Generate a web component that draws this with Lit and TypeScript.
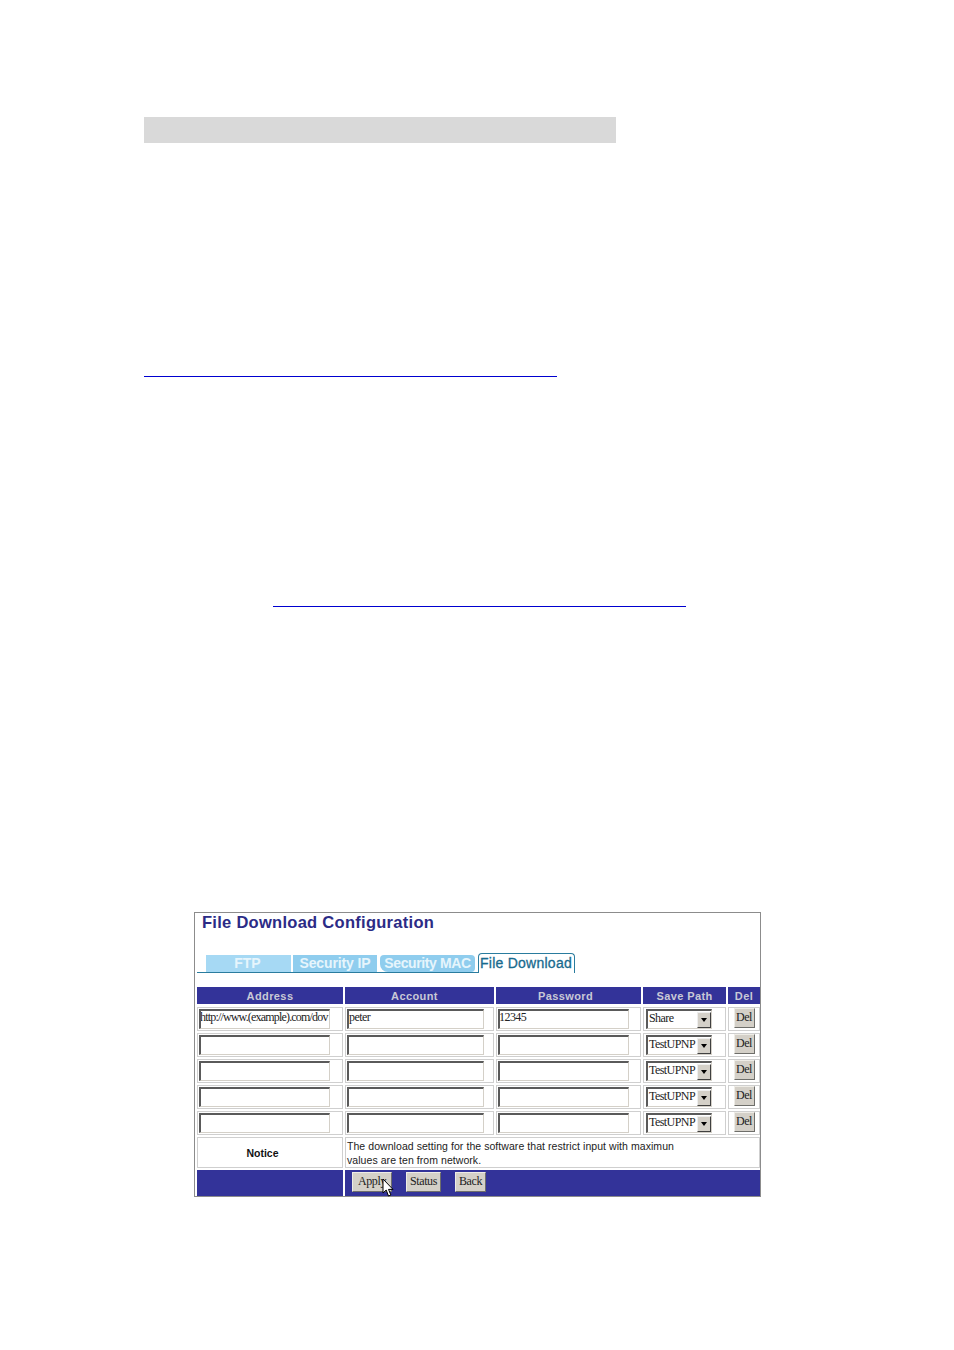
import { LitElement, html, css } from "lit";
import { customElement } from "lit/decorators.js";

const ROWS = [
  { address: "http://www.(example).com/dov", account: "peter", password: "12345", path: "Share" },
  { address: "", account: "", password: "", path: "TestUPNP" },
  { address: "", account: "", password: "", path: "TestUPNP" },
  { address: "", account: "", password: "", path: "TestUPNP" },
  { address: "", account: "", password: "", path: "TestUPNP" },
];

@customElement("app-root")
export class AppRoot extends LitElement {
  static styles = css`
    :host { display: block; width: 954px; height: 1350px; background: #fff; overflow: hidden; font-family: "Liberation Sans", Arial, sans-serif; }
    .page { display: flex; flex-direction: column; align-items: flex-start; padding: 117px 0 0 144px; }
    .shade { width: 472px; height: 26px; background: #d9d9d9; }
    .rule { width: 413px; height: 1px; background: #0000d0; }
    .r1 { margin-top: 233px; }
    .r2 { margin-top: 229px; margin-left: 129px; }
    .panel { position: relative; box-sizing: border-box; width: 567px; height: 285px; margin: 305px 0 0 50px; border: 1px solid #8c8c8c; background: #fff; padding: 0 0 0 2px; }
    h1 { margin: 0; padding: 0 0 0 5px; height: 21px; font-size: 16.5px; line-height: 18px; font-weight: 700; color: #2b2b86; letter-spacing: 0.28px; white-space: nowrap; }
    .tabs { display: flex; align-items: flex-end; height: 39px; width: 378px; position: relative; padding-left: 9px; gap: 2px; }
    .line { position: absolute; left: 0; bottom: 0; width: 281px; height: 1px; background: #2a7c9e; }
    .tab { box-sizing: border-box; height: 17px; margin-bottom: 1px; background: #a6d9f4; color: #e6f5fc; font-weight: 700; font-size: 14px; line-height: 17px; text-align: center; white-space: nowrap; }
    .t1 { width: 85px; padding-right: 2px; }
    .t2 { width: 84px; background: #8fcdee; letter-spacing: -0.12px; }
    .t3 { width: 95px; margin-left: 1px; background: #8fcdee; border-radius: 4px 4px 4px 8px; letter-spacing: -0.38px; }
    .active { box-sizing: border-box; width: 97px; height: 20px; margin: 0 0 0 1px; border: 1px solid #2a7c9e; border-bottom: 0; border-radius: 4px 4px 0 0; background: #fff; color: #186a8e; font-size: 14px; line-height: 18px; font-weight: 400; -webkit-text-stroke: 0.3px #186a8e; letter-spacing: 0.25px; white-space: nowrap; padding-left: 1px; }
    .grid { display: grid; grid-template-columns: 146px 149px 145px 83px 32px; grid-template-rows: 18px repeat(5, 24px) 31px 26px; gap: 2px; margin-top: 14px; }
    .head { height: 17px; background: #333399; color: #c9c9d6; font-size: 11px; font-weight: 700; line-height: 18px; text-align: center; letter-spacing: 0.4px; }
    .h2 { padding-right: 10px; }
    .h3 { padding-right: 6px; }
    .cell { box-sizing: border-box; border: 1px solid #cfcfcf; display: flex; align-items: center; background: #fff; }
    .cell.del { justify-content: center; align-items: flex-start; }
    .input { box-sizing: border-box; height: 20px; margin-left: 1px; border: 1px solid #d4d0c8; border-top: 2px solid #5a5a5a; border-left: 2px solid #5a5a5a; background: #fff; font-family: "Liberation Serif", serif; font-size: 12px; line-height: 13px; color: #222; white-space: nowrap; overflow: hidden; letter-spacing: -0.55px; }
    .w1 { width: 131px; letter-spacing: -0.82px; text-indent: -1px; }
    .w2 { width: 137px; }
    .w3 { width: 131px; margin-left: 1px; text-indent: -1px; }
    .select { box-sizing: border-box; width: 66px; height: 20px; margin-left: 2px; border: 1px solid #d4d0c8; border-top: 2px solid #5a5a5a; border-left: 2px solid #5a5a5a; background: #fff; display: flex; align-items: center; justify-content: space-between; font-family: "Liberation Serif", serif; font-size: 12px; line-height: 14px; color: #222; letter-spacing: -0.55px; padding-left: 1px; }
    .value { padding-bottom: 4px; }
    .arrow { box-sizing: border-box; width: 14px; height: 16px; background: #d4d0c8; border: 1px solid; border-color: #eee #404040 #404040 #eee; display: flex; align-items: center; justify-content: center; }
    .arrow i { width: 0; height: 0; border-left: 3px solid transparent; border-right: 3px solid transparent; border-top: 4px solid #000; }
    .btn { box-sizing: border-box; background: #d4d0c8; border: 1px solid; border-color: #eeece6 #6e6e6a #6e6e6a #eeece6; font-family: "Liberation Serif", serif; font-size: 12px; color: #222; letter-spacing: -0.4px; display: flex; align-items: center; justify-content: center; }
    .b-del { width: 21px; height: 20px; padding-bottom: 2px; }
    .notice-h { font-size: 10.5px; font-weight: 700; color: #111; justify-content: center; padding-right: 15px; }
    .notice { grid-column: 2 / 6; display: block; font-size: 10.5px; line-height: 14px; color: #222; padding: 1px 0 0 1px; white-space: pre; letter-spacing: 0.06px; }
    .bar { background: #333399; }
    .actions { grid-column: 2 / 6; display: flex; align-items: flex-start; padding: 2px 0 0 7px; gap: 14px; }
    .actions .btn { height: 20px; padding-bottom: 2px; }
    .a1 { width: 40px; }
    .a2 { width: 35px; }
    .a3 { width: 31px; }
    .cursor { position: absolute; left: 187px; top: 265px; }
  `;

  render() {
    return html`<div class="page">
      <div class="shade"></div>
      <div class="rule r1"></div>
      <div class="rule r2"></div>
      <section class="panel">
        <h1>File Download Configuration</h1>
        <div class="tabs">
          <div class="line"></div>
          <div class="tab t1">FTP</div>
          <div class="tab t2">Security IP</div>
          <div class="tab t3">Security MAC</div>
          <div class="active">File Download</div>
        </div>
        <div class="grid">
          <div class="head">Address</div>
          <div class="head h2">Account</div>
          <div class="head h3">Password</div>
          <div class="head">Save Path</div>
          <div class="head">Del</div>
          ${ROWS.map(
            (r) => html`
              <div class="cell"><div class="input w1">${r.address}</div></div>
              <div class="cell"><div class="input w2">${r.account}</div></div>
              <div class="cell"><div class="input w3">${r.password}</div></div>
              <div class="cell"><div class="select"><span class="value">${r.path}</span><span class="arrow"><i></i></span></div></div>
              <div class="cell del"><div class="btn b-del">Del</div></div>
            `
          )}
          <div class="cell notice-h">Notice</div>
          <div class="cell notice">The download setting for the software that restrict input with maximun
values are ten from network.</div>
          <div class="bar"></div>
          <div class="bar actions">
            <div class="btn a1">Apply</div>
            <div class="btn a2">Status</div>
            <div class="btn a3">Back</div>
          </div>
        </div>
        <svg class="cursor" width="12" height="20" viewBox="0 0 12 20">
          <path d="M1 1v14l3.2-3 2.3 6 2.4-1-2.4-5.6H11z" fill="#fff" stroke="#000" stroke-width="1"/>
        </svg>
      </section>
    </div>`;
  }
}
